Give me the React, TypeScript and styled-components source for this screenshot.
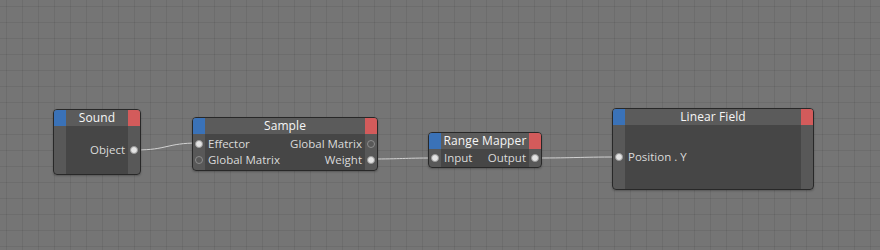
import React from 'react';
import styled, { createGlobalStyle } from 'styled-components';

const GlobalStyle = createGlobalStyle`
	html, body {
		margin: 0;
		padding: 0;
	}
	body {
		background: #747474;
		font-family: "Open Sans", "Liberation Sans", sans-serif;
	}
`;

type Port = { label: string; linked: boolean };

type NodeData = {
	title: string;
	x: number;
	y: number;
	w: number;
	h: number;
	rows: { input?: Port; output?: Port }[];
};

const nodes: NodeData[] = [
	{
		title: 'Sound',
		x: 53,
		y: 109,
		w: 88,
		h: 66,
		rows: [{ output: { label: 'Object', linked: true } }],
	},
	{
		title: 'Sample',
		x: 192,
		y: 117,
		w: 186,
		h: 54,
		rows: [
			{
				input: { label: 'Effector', linked: true },
				output: { label: 'Global Matrix', linked: false },
			},
			{
				input: { label: 'Global Matrix', linked: false },
				output: { label: 'Weight', linked: true },
			},
		],
	},
	{
		title: 'Range Mapper',
		x: 428,
		y: 132,
		w: 114,
		h: 36,
		rows: [
			{
				input: { label: 'Input', linked: true },
				output: { label: 'Output', linked: true },
			},
		],
	},
	{
		title: 'Linear Field',
		x: 612,
		y: 108,
		w: 202,
		h: 82,
		rows: [{ input: { label: 'Position . Y', linked: true } }],
	},
];

const wires = [
	{ x1: 136, y1: 150, x2: 198, y2: 143 },
	{ x1: 371, y1: 159, x2: 434, y2: 158 },
	{ x1: 536, y1: 158, x2: 618, y2: 157 },
];

function wirePath(w: { x1: number; y1: number; x2: number; y2: number }) {
	const dx = (w.x2 - w.x1) * 0.5;
	return `M${w.x1} ${w.y1} C${w.x1 + dx} ${w.y1} ${w.x2 - dx} ${w.y2} ${w.x2} ${w.y2}`;
}

const App = () => {
	return (
		<Canvas>
			<GlobalStyle />
			<Wires width={880} height={250}>
				{wires.map((w, i) => (
					<path
						key={i}
						d={wirePath(w)}
						fill="none"
						stroke="#d2d2d2"
						strokeWidth={1}
					/>
				))}
			</Wires>
			{nodes.map((n) => (
				<NodeBox
					key={n.title}
					style={{ left: n.x, top: n.y, width: n.w, height: n.h }}
				>
					<Header>
						<Swatch $color="#3a72b8" />
						<Title>{n.title}</Title>
						<Swatch $color="#d35b5b" />
					</Header>
					<Body>
						{n.rows.map((r, i) => (
							<Row key={i}>
								<PortCell>{r.input && <Dot $linked={r.input.linked} />}</PortCell>
								<Labels>
									<span>{r.input ? r.input.label : ''}</span>
									<span>{r.output ? r.output.label : ''}</span>
								</Labels>
								<PortCell>{r.output && <Dot $linked={r.output.linked} />}</PortCell>
							</Row>
						))}
					</Body>
				</NodeBox>
			))}
		</Canvas>
	);
};

export default App;

const Canvas = styled.div`
	position: relative;
	width: 880px;
	height: 250px;
	overflow: hidden;
	background-color: #757575;
	background-image: linear-gradient(to right, rgba(0, 0, 0, 0.07) 1px, transparent 1px),
		linear-gradient(to bottom, rgba(0, 0, 0, 0.07) 1px, transparent 1px);
	background-size: 16px 16px;
	background-position: 6px 6px;
`;

const Wires = styled.svg`
	position: absolute;
	left: 0;
	top: 0;
`;

const NodeBox = styled.div`
	position: absolute;
	box-sizing: border-box;
	display: flex;
	flex-direction: column;
	border: 1px solid #282828;
	border-radius: 4px;
	overflow: hidden;
	background: linear-gradient(
		to right,
		#585858 12px,
		#464646 12px,
		#464646 calc(100% - 12px),
		#585858 calc(100% - 12px)
	);
	box-shadow: 0 1px 2px rgba(0, 0, 0, 0.25);
`;

const Header = styled.div`
	display: grid;
	grid-template-columns: 12px 1fr 12px;
	height: 16px;
	flex-shrink: 0;
	background: #5b5b5b;
`;

const Swatch = styled.div<{ $color: string }>`
	background: ${(p) => p.$color};
`;

const Title = styled.div`
	text-align: center;
	color: #f6f6f6;
	font-size: 12px;
	font-weight: 400;
	line-height: 16px;
	letter-spacing: 0.1px;
	white-space: nowrap;
`;

const Body = styled.div`
	flex: 1;
	display: flex;
	flex-direction: column;
	justify-content: center;
`;

const Row = styled.div`
	display: grid;
	grid-template-columns: 12px 1fr 12px;
	height: 16px;
	align-items: center;
`;

const PortCell = styled.div`
	display: flex;
	justify-content: center;
	align-items: center;
`;

const Dot = styled.div<{ $linked: boolean }>`
	box-sizing: border-box;
	width: 8px;
	height: 8px;
	border-radius: 50%;
	border: 1px solid ${(p) => (p.$linked ? '#9a9a9a' : '#8c8c8c')};
	background: ${(p) => (p.$linked ? '#e4e4e4' : 'transparent')};
`;

const Labels = styled.div`
	display: flex;
	justify-content: space-between;
	padding: 0 3px;
	color: #dadada;
	font-size: 11.5px;
	line-height: 16px;
	white-space: nowrap;
`;
